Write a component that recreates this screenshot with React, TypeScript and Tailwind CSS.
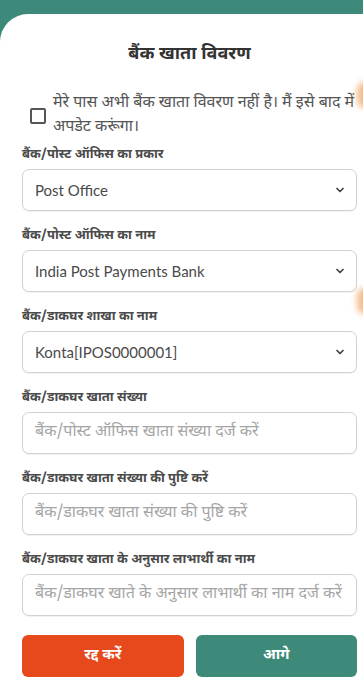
import { ChevronDown } from "lucide-react";

const font = { fontFamily: "'Noto Sans Devanagari', 'Noto Sans', Lato, sans-serif" };

function Label({ text }: { text: string }) {
  return (
    <div className="h-[18px] text-[13px] font-bold leading-[18px] text-[#4b4b4b]">{text}</div>
  );
}

function SelectBox({ value }: { value: string }) {
  return (
    <div className="mt-[5px] flex h-[42px] items-center justify-between rounded-[7px] border border-[#d2d2d2] bg-white pl-[12px] pr-[10px] shadow-[0_1px_1px_rgba(0,0,0,0.06)]">
      <span className="text-[15px] text-[#4a4a4a]" style={{ fontFamily: "Lato, sans-serif" }}>
        {value}
      </span>
      <ChevronDown size={12} strokeWidth={3.5} className="text-[#444]" />
    </div>
  );
}

function InputBox({ placeholder }: { placeholder: string }) {
  return (
    <div className="mt-[5px] flex h-[42px] items-center overflow-hidden whitespace-nowrap rounded-[7px] border border-[#d2d2d2] bg-white pl-[12px] shadow-[0_1px_1px_rgba(0,0,0,0.06)]">
      <span className="text-[16px] text-[#a6a6a6]">{placeholder}</span>
    </div>
  );
}

const fields: { label: string; kind: "select" | "input"; value: string }[] = [
  { label: "बैंक/पोस्ट ऑफिस का प्रकार", kind: "select", value: "Post Office" },
  { label: "बैंक/पोस्ट ऑफिस का नाम", kind: "select", value: "India Post Payments Bank" },
  { label: "बैंक/डाकघर शाखा का नाम", kind: "select", value: "Konta[IPOS0000001]" },
  { label: "बैंक/डाकघर खाता संख्या", kind: "input", value: "बैंक/पोस्ट ऑफिस खाता संख्या दर्ज करें" },
  { label: "बैंक/डाकघर खाता संख्या की पुष्टि करें", kind: "input", value: "बैंक/डाकघर खाता संख्या की पुष्टि करें" },
  { label: "बैंक/डाकघर खाता के अनुसार लाभार्थी का नाम", kind: "input", value: "बैंक/डाकघर खाते के अनुसार लाभार्थी का नाम दर्ज करें" },
];

export default function App() {
  return (
    <div className="relative h-[680px] w-[363px] overflow-hidden bg-[#3e8a7a]" style={font}>
      <div className="mt-[14px] h-[666px] rounded-tl-[28px] bg-white pl-[22px] pr-[6px] pt-[29px]">
        <h1 className="text-center text-[18px] font-bold leading-[24px] text-[#333]">बैंक खाता विवरण</h1>

        <div className="mt-[25px] flex items-center gap-[7px] pl-[8px]">
          <div className="h-[16px] w-[16px] shrink-0 rounded-[2px] border-2 border-[#555]" />
          <p className="text-[16px] leading-[24px] text-[#555]">
            मेरे पास अभी बैंक खाता विवरण नहीं है। मैं इसे बाद में अपडेट करूंगा।
          </p>
        </div>

        <div className="mt-[6px] flex flex-col gap-[16px]">
          {fields.map((f) => (
            <div key={f.label}>
              <Label text={f.label} />
              {f.kind === "select" ? <SelectBox value={f.value} /> : <InputBox placeholder={f.value} />}
            </div>
          ))}
        </div>

        <div className="mt-[19px] grid grid-cols-2 gap-[12px]">
          <button className="h-[42px] rounded-[6px] bg-[#e6491c] text-[15px] font-bold text-white">रद्द करें</button>
          <button className="h-[42px] rounded-[6px] bg-[#3d8a7a] text-[15px] font-bold text-white">आगे</button>
        </div>
      </div>

      <div className="absolute right-[-10px] top-[82px] h-[26px] w-[16px] rounded-full bg-[#f0a05a] opacity-70 blur-[3px]" />
      <div className="absolute right-[-10px] top-[288px] h-[26px] w-[16px] rounded-full bg-[#f0a05a] opacity-70 blur-[3px]" />
    </div>
  );
}
